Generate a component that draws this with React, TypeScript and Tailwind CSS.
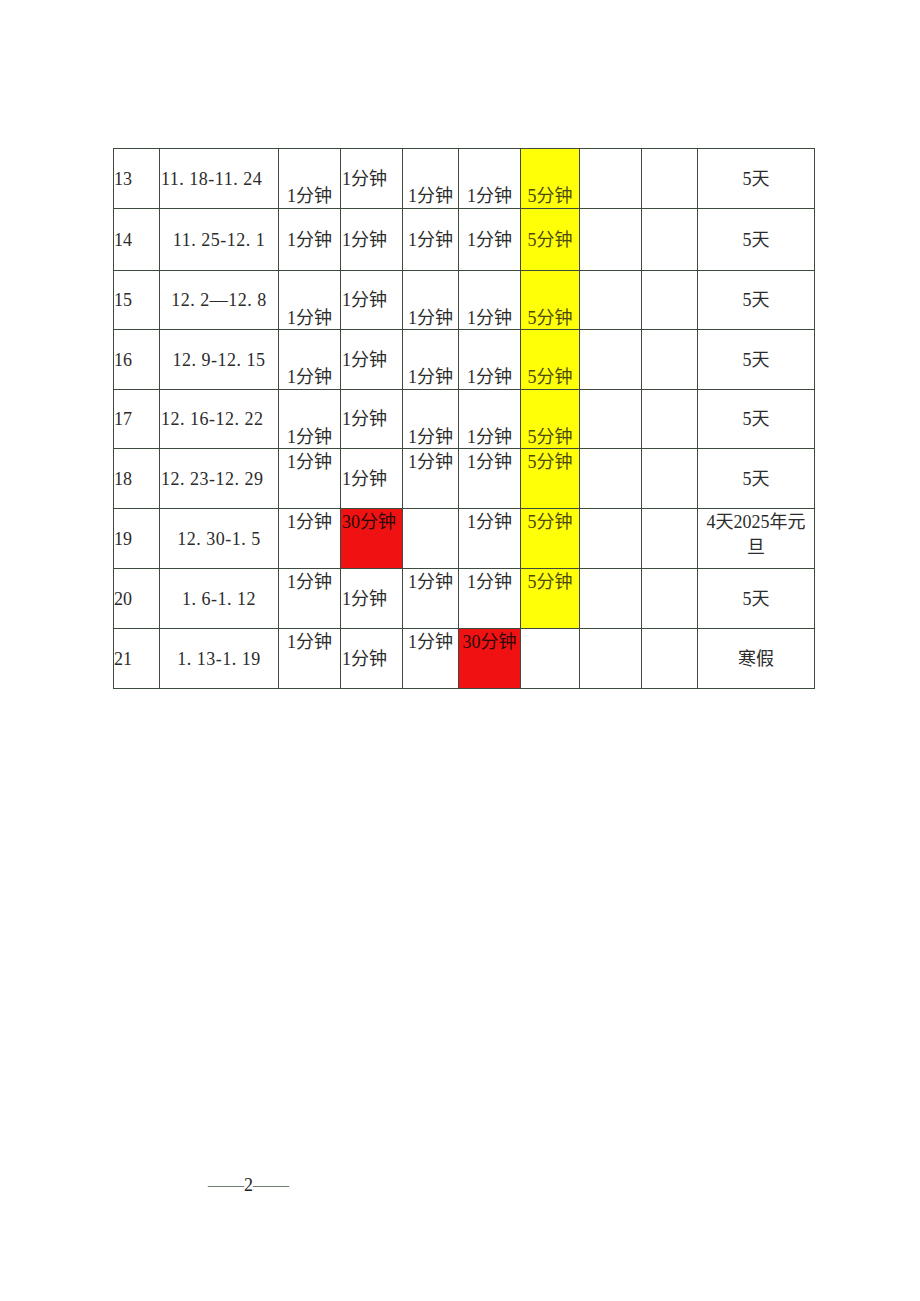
import React from "react";

type Pos = "m" | "l" | "t";
type Cell = {
  text?: string;
  pos?: Pos;
  align?: "left" | "center";
  bg?: "y" | "r";
};

const colWidths = [46, 119, 62, 62, 56, 62, 59, 62, 56, 117];
const rowHeights = [60, 62, 59, 60, 59, 60, 60, 60, 60];

const k = (t: string, pos: Pos, extra: Partial<Cell> = {}): Cell => ({ text: t, pos, ...extra });
const E: Cell = {};

const rows: Cell[][] = [
  [k("13", "m", { align: "left" }), k("11. 18-11. 24", "m", { align: "left" }), k("1分钟", "l"), k("1分钟", "m", { align: "left" }), k("1分钟", "l"), k("1分钟", "l"), k("5分钟", "l", { bg: "y" }), E, E, k("5天", "m")],
  [k("14", "m", { align: "left" }), k("11. 25-12. 1", "m"), k("1分钟", "m"), k("1分钟", "m", { align: "left" }), k("1分钟", "m"), k("1分钟", "m"), k("5分钟", "m", { bg: "y" }), E, E, k("5天", "m")],
  [k("15", "m", { align: "left" }), k("12. 2—12. 8", "m"), k("1分钟", "l"), k("1分钟", "m", { align: "left" }), k("1分钟", "l"), k("1分钟", "l"), k("5分钟", "l", { bg: "y" }), E, E, k("5天", "m")],
  [k("16", "m", { align: "left" }), k("12. 9-12. 15", "m"), k("1分钟", "l"), k("1分钟", "m", { align: "left" }), k("1分钟", "l"), k("1分钟", "l"), k("5分钟", "l", { bg: "y" }), E, E, k("5天", "m")],
  [k("17", "m", { align: "left" }), k("12. 16-12. 22", "m", { align: "left" }), k("1分钟", "l"), k("1分钟", "m", { align: "left" }), k("1分钟", "l"), k("1分钟", "l"), k("5分钟", "l", { bg: "y" }), E, E, k("5天", "m")],
  [k("18", "m", { align: "left" }), k("12. 23-12. 29", "m", { align: "left" }), k("1分钟", "t"), k("1分钟", "m", { align: "left" }), k("1分钟", "t"), k("1分钟", "t"), k("5分钟", "t", { bg: "y" }), E, E, k("5天", "m")],
  [k("19", "m", { align: "left" }), k("12. 30-1. 5", "m"), k("1分钟", "t"), k("30分钟", "t", { align: "left", bg: "r" }), E, k("1分钟", "t"), k("5分钟", "t", { bg: "y" }), E, E, { text: "4天2025年元旦", pos: "t" }],
  [k("20", "m", { align: "left" }), k("1. 6-1. 12", "m"), k("1分钟", "t"), k("1分钟", "m", { align: "left" }), k("1分钟", "t"), k("1分钟", "t"), k("5分钟", "t", { bg: "y" }), E, E, k("5天", "m")],
  [k("21", "m", { align: "left" }), k("1. 13-1. 19", "m"), k("1分钟", "t"), k("1分钟", "m", { align: "left" }), k("1分钟", "t"), k("30分钟", "t", { bg: "r" }), E, E, E, k("寒假", "m")],
];

function CellView({ c, ci, h, isDate }: { c: Cell; ci: number; h: number; isDate: boolean }) {
  const pos = c.pos ?? "m";
  const align = c.align ?? "center";
  const bg = c.bg === "y" ? "bg-[#ffff08]" : c.bg === "r" ? "bg-[#f01212]" : "bg-white";
  const posCls =
    pos === "m" ? "items-center" : pos === "l" ? "items-center pt-[35px]" : "items-start pt-[3px]";
  const alignCls =
    align === "left" ? (ci === 0 ? "justify-start pl-0" : "justify-start pl-[1px]") : "justify-center";
  const textColor = c.bg === "y" ? "text-[#4d4a10]" : c.bg === "r" ? "text-[#2a0a0a]" : "text-[#2b2b2b]";
  const isLast = ci === 9;
  return (
    <div
      className={`flex ${posCls} ${alignCls} ${bg} ${textColor} border-r border-b border-[#3d4a3d] overflow-visible whitespace-nowrap`}
      style={{ height: h }}
    >
      {c.text ? (
        isLast && c.text.length > 4 ? (
          <span className="block w-full text-center leading-[25px] whitespace-normal px-[8px] -mt-[2px]">
            {c.text}
          </span>
        ) : (
          <span className={`leading-[20px] ${isDate ? "tracking-[0.5px]" : ""}`}>{c.text}</span>
        )
      ) : null}
    </div>
  );
}

export default function App() {
  return (
    <div
      className="w-[920px] h-[1301px] bg-white relative overflow-hidden text-[18px]"
      style={{ fontFamily: '"Liberation Serif", "Noto Sans CJK SC", serif' }}
    >
      <div className="pt-[148px] pl-[113px]">
        <div
          className="grid border-l border-t border-[#3d4a3d] w-max"
          style={{ gridTemplateColumns: colWidths.map((w) => `${w}px`).join(" ") }}
        >
          {rows.map((r, ri) =>
            r.map((c, ci) => (
              <CellView key={`${ri}-${ci}`} c={c} ci={ci} h={rowHeights[ri]} isDate={ci === 1} />
            ))
          )}
        </div>
      </div>
      <div className="pl-[208px] pt-[486px] text-[18px] leading-[21px] whitespace-nowrap">
        <span className="text-[#6f7f6f]">——</span>
        <span className="text-[#222]">2</span>
        <span className="text-[#6f7f6f]">——</span>
      </div>
    </div>
  );
}
